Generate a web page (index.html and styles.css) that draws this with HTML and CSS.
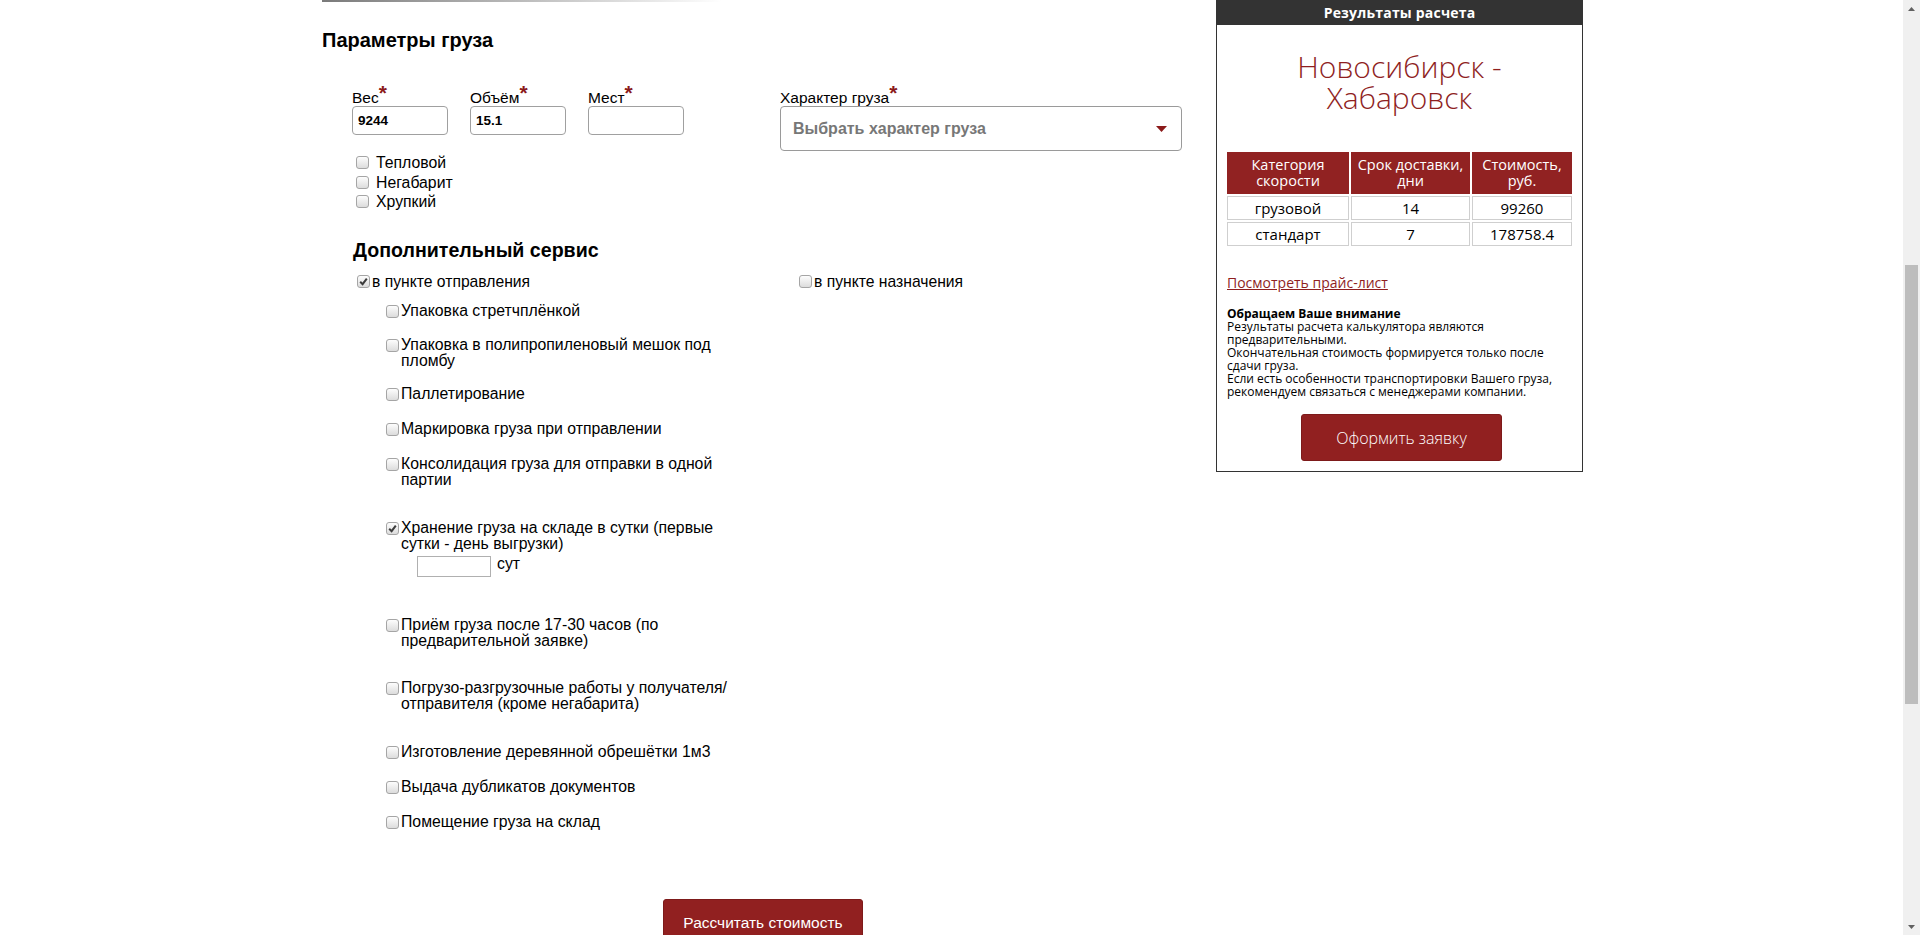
FILE: index.html
```html
<!DOCTYPE html>
<html lang="ru">
<head>
<meta charset="utf-8">
<title>Калькулятор стоимости</title>
<link rel="stylesheet" href="styles.css">
</head>
<body>
<div class="window">
  <div class="viewport">
    <div class="layout">
      <form class="calc">
        <div class="toprule"></div>
        <h2 class="title">Параметры груза</h2>
        <div class="params">
          <div class="params-left">
            <div class="fields">
              <div class="field">
                <label class="flabel">Вес<span class="req">*</span></label>
                <input class="input" type="text" value="9244">
              </div>
              <div class="field">
                <label class="flabel">Объём<span class="req">*</span></label>
                <input class="input" type="text" value="15.1">
              </div>
              <div class="field last">
                <label class="flabel">Мест<span class="req">*</span></label>
                <input class="input" type="text" value="">
              </div>
            </div>
            <ul class="opts">
              <li><span class="cb"></span>Тепловой</li>
              <li><span class="cb"></span>Негабарит</li>
              <li><span class="cb"></span>Хрупкий</li>
            </ul>
          </div>
          <div class="cargo">
            <label class="flabel">Характер груза<span class="req">*</span></label>
            <div class="select">
              <span>Выбрать характер груза</span>
              <svg class="caret" width="11" height="6" viewBox="0 0 11 6"><path d="M0 0 H11 L5.5 6 Z" fill="#8b1a1a"/></svg>
            </div>
          </div>
        </div>
        <h2 class="title sub">Дополнительный сервис</h2>
        <div class="points">
          <label class="point first"><span class="cb"><svg viewBox="0 0 9 9"><path d="M1.2 4.8 L3.6 7.2 L7.8 1.6" fill="none" stroke="#3c3c3c" stroke-width="2"/></svg></span>в пункте отправления</label>
          <label class="point"><span class="cb"></span>в пункте назначения</label>
        </div>
        <ul class="svc-list">
          <li class="svc m18"><span class="cb"></span><span class="svc-text">Упаковка стретчплёнкой</span></li>
          <li class="svc m17"><span class="cb"></span><span class="svc-text">Упаковка в полипропиленовый мешок под<br>пломбу</span></li>
          <li class="svc"><span class="cb"></span><span class="svc-text">Паллетирование</span></li>
          <li class="svc"><span class="cb"></span><span class="svc-text">Маркировка груза при отправлении</span></li>
          <li class="svc m32"><span class="cb"></span><span class="svc-text">Консолидация груза для отправки в одной<br>партии</span></li>
          <li class="svc m40"><span class="cb"><svg viewBox="0 0 9 9"><path d="M1.2 4.8 L3.6 7.2 L7.8 1.6" fill="none" stroke="#3c3c3c" stroke-width="2"/></svg></span><span class="svc-text">Хранение груза на складе в сутки (первые<br>сутки - день выгрузки)
            <span class="days"><input class="days-input" type="text" value=""><span class="days-unit">сут</span></span></span></li>
          <li class="svc m31"><span class="cb"></span><span class="svc-text">Приём груза после 17-30 часов (по<br>предварительной заявке)</span></li>
          <li class="svc m32"><span class="cb"></span><span class="svc-text">Погрузо-разгрузочные работы у получателя/<br>отправителя (кроме негабарита)</span></li>
          <li class="svc"><span class="cb"></span><span class="svc-text">Изготовление деревянной обрешётки 1м3</span></li>
          <li class="svc"><span class="cb"></span><span class="svc-text">Выдача дубликатов документов</span></li>
          <li class="svc m0"><span class="cb"></span><span class="svc-text">Помещение груза на склад</span></li>
        </ul>
        <div class="submit-row"><button class="btn-calc" type="button">Рассчитать стоимость</button></div>
      </form>
      <aside class="result">
        <div class="res-head">Результаты расчета</div>
        <div class="route">Новосибирск -<br>Хабаровск</div>
        <table class="rates">
          <colgroup><col class="c1"><col class="c2"><col class="c3"></colgroup>
          <thead>
            <tr><th>Категория<br>скорости</th><th>Срок доставки,<br>дни</th><th>Стоимость,<br>руб.</th></tr>
          </thead>
          <tbody>
            <tr><td>грузовой</td><td>14</td><td>99260</td></tr>
            <tr><td>стандарт</td><td>7</td><td>178758.4</td></tr>
          </tbody>
        </table>
        <a class="price-link" href="#">Посмотреть прайс-лист</a>
        <p class="notice"><b>Обращаем Ваше внимание</b><br>Результаты расчета калькулятора являются<br>предварительными.<br>Окончательная стоимость формируется только после<br>сдачи груза.<br>Если есть особенности транспортировки Вашего груза,<br>рекомендуем связаться с менеджерами компании.</p>
        <button class="btn-order" type="button">Оформить заявку</button>
      </aside>
    </div>
  </div>
  <div class="scrollbar">
    <div class="sb-arrow"><svg width="7" height="4" viewBox="0 0 7 4"><path d="M0 4 L3.5 0 L7 4 Z" fill="#606060"/></svg></div>
    <div class="sb-track"><div class="sb-thumb"></div></div>
    <div class="sb-arrow"><svg width="7" height="4" viewBox="0 0 7 4"><path d="M0 0 L7 0 L3.5 4 Z" fill="#606060"/></svg></div>
  </div>
</div>
</body>
</html>
```
FILE: styles.css
```css
* { box-sizing: border-box; }
html, body { margin: 0; padding: 0; }
body {
  background: #fff;
  color: #000;
  font-family: "Liberation Sans", Arial, sans-serif;
  overflow: hidden;
}
.window { display: flex; height: 935px; }
.viewport { flex: 1; overflow: hidden; }
.layout { display: flex; align-items: flex-start; padding-left: 322px; }

/* ---------- form ---------- */
.calc { width: 894px; flex: none; }
.toprule {
  width: 400px; height: 2px;
  background: linear-gradient(to right, #7a7a7a, #b5b5b5 45%, #fff);
}
.title { margin: 27px 0 0; font-size: 20px; line-height: 22px; font-weight: bold; }
.title.sub { margin-top: 27px; padding-left: 31px; font-size: 19.6px; }

.params { display: flex; align-items: flex-start; margin-top: 39px; padding-left: 30px; }
.params-left { width: 332px; flex: none; }
.fields { display: flex; }
.field { width: 96px; margin-right: 22px; }
.field.last { margin-right: 0; }
.flabel { display: block; font-size: 15.5px; line-height: 16px; white-space: nowrap; }
.req {
  color: #8b1a1a; font-weight: bold; font-size: 21px;
  line-height: 0; vertical-align: 3px;
}
.input {
  display: block; width: 96px; height: 29px; margin: 0;
  border: 1px solid #a0a0a0; border-radius: 4px;
  padding: 0 5px; background: #fff;
  font: bold 13.5px "Liberation Sans", Arial, sans-serif; color: #000;
}
.cargo { margin-left: 96px; }
.select {
  width: 402px; height: 45px;
  border: 1px solid #9a9a9a; border-radius: 4px;
  display: flex; align-items: center; justify-content: space-between;
  padding: 0 14px 0 12px;
  font-weight: bold; font-size: 16px; color: #777;
}
.caret { display: block; }

.opts { list-style: none; margin: 18px 0 0; padding: 0 0 0 4px; }
.opts li { display: flex; align-items: center; font-size: 15.8px; line-height: 19.5px; }
.opts .cb { margin-right: 7px; }

.cb {
  width: 13px; height: 13px; flex: none;
  border: 1px solid #a5a5a5; border-radius: 3px;
  background: linear-gradient(#fdfdfd, #dcdcdc);
  display: inline-flex; align-items: center; justify-content: center;
}
.cb svg { width: 9px; height: 9px; display: block; }

.points { display: flex; margin-top: 13px; padding-left: 35px; }
.point { display: flex; align-items: center; gap: 2px; font-size: 15.7px; line-height: 16px; }
.point.first { width: 442px; }

.svc-list { list-style: none; margin: 13px 0 0; padding: 0 0 0 64px; }
.svc { display: flex; align-items: flex-start; gap: 2px; font-size: 15.8px; line-height: 16px; margin-bottom: 19px; }
.svc .cb { margin-top: 2px; }
.svc.m0 { margin-bottom: 0; }
.svc.m17 { margin-bottom: 17px; }
.svc.m18 { margin-bottom: 18px; }
.svc.m31 { margin-bottom: 31px; }
.svc.m32 { margin-bottom: 32px; }
.svc.m40 { margin-bottom: 40px; }
.svc-text { display: block; }
.days { display: flex; align-items: flex-start; margin-top: 4px; padding-left: 16px; }
.days-input {
  width: 74px; height: 21px; margin: 0; padding: 0 3px;
  border: 1px solid #b0b0b0; border-radius: 0; background: #fff;
}
.days-unit { margin-left: 6px; line-height: 16px; }

.submit-row { margin-top: 69px; padding-left: 341px; }
.btn-calc {
  width: 200px; height: 52px;
  background: #912020; color: #fff;
  border: 1px solid #7d1a1a; border-radius: 3px;
  font: 15.5px "Liberation Sans", Arial, sans-serif;
  padding: 0 0 4px;
}

/* ---------- result panel ---------- */
.result {
  width: 367px; flex: none;
  border: 1px solid #333; border-top: none;
  font-family: "Open Sans", "Liberation Sans", sans-serif;
  padding-bottom: 10px;
  display: flex; flex-direction: column;
}
.res-head {
  background: #333; color: #fff;
  height: 25px; line-height: 25px;
  text-align: center; font-weight: bold; font-size: 14px; letter-spacing: 0.2px;
}
.route {
  margin-top: 26px;
  text-align: center; font-weight: 300; font-size: 30px; line-height: 31px;
  color: #8f1f1f;
}
.rates {
  margin: 37px auto 0; width: 349px;
  border-collapse: separate; border-spacing: 2px;
  table-layout: fixed;
  font-size: 15px;
}
.rates col.c1 { width: 122px; }
.rates col.c2 { width: 119px; }
.rates col.c3 { width: 100px; }
.rates th {
  background: #912222; color: #fff; font-weight: 400; font-size: 14.5px;
  border: 1px solid #912222;
  line-height: 16px; padding: 4px 2px;
  text-align: center;
}
.rates td {
  border: 1px solid #cfcfcf;
  line-height: 20px; padding: 1px 2px;
  text-align: center;
}
.price-link {
  margin: 25px 0 0 10px; align-self: flex-start;
  font-size: 14px; line-height: 20px;
  color: #8f1f1f; text-decoration: underline;
}
.notice { margin: 14px 0 0 10px; font-size: 12px; line-height: 13px; white-space: nowrap; }
.btn-order {
  align-self: center; margin: 16px 0 0 4px;
  width: 201px; height: 47px;
  background: #912020; color: #fff;
  border: 1px solid #7d1a1a; border-radius: 3px;
  font: 300 16px "Open Sans", sans-serif;
}

/* ---------- scrollbar ---------- */
.scrollbar {
  width: 17px; flex: none; background: #f0f0f0;
  display: flex; flex-direction: column;
}
.sb-arrow { height: 17px; display: flex; align-items: center; justify-content: center; }
.sb-track { flex: 1; padding: 248px 2px 0; }
.sb-thumb { height: 439px; background: #bdbdbd; }
```
